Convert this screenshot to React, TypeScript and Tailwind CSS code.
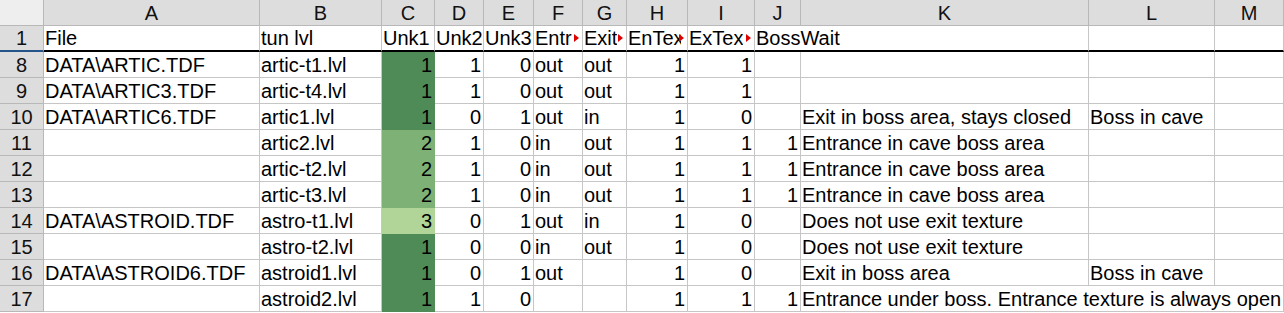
import React from 'react';

type V = string | number | null;

type Row = {
  n: string;
  cells: V[];
  spans?: Record<number, number>;
  marks?: number[];
};

const LETTERS = ['A', 'B', 'C', 'D', 'E', 'F', 'G', 'H', 'I', 'J', 'K', 'L', 'M'];

const rows: Row[] = [
  {
    n: '1',
    cells: ['File', 'tun lvl', 'Unk1', 'Unk2', 'Unk3', 'Entr', 'Exit', 'EnTex', 'ExTex', 'BossWait', null, null, null],
    spans: { 9: 2 },
    marks: [5, 6, 7, 8],
  },
  { n: '8', cells: ['DATA\\ARTIC.TDF', 'artic-t1.lvl', 1, 1, 0, 'out', 'out', 1, 1, null, null, null, null] },
  { n: '9', cells: ['DATA\\ARTIC3.TDF', 'artic-t4.lvl', 1, 1, 0, 'out', 'out', 1, 1, null, null, null, null] },
  {
    n: '10',
    cells: ['DATA\\ARTIC6.TDF', 'artic1.lvl', 1, 0, 1, 'out', 'in', 1, 0, null, 'Exit in boss area, stays closed', 'Boss in cave', null],
  },
  { n: '11', cells: [null, 'artic2.lvl', 2, 1, 0, 'in', 'out', 1, 1, 1, 'Entrance in cave boss area', null, null] },
  { n: '12', cells: [null, 'artic-t2.lvl', 2, 1, 0, 'in', 'out', 1, 1, 1, 'Entrance in cave boss area', null, null] },
  { n: '13', cells: [null, 'artic-t3.lvl', 2, 1, 0, 'in', 'out', 1, 1, 1, 'Entrance in cave boss area', null, null] },
  { n: '14', cells: ['DATA\\ASTROID.TDF', 'astro-t1.lvl', 3, 0, 1, 'out', 'in', 1, 0, null, 'Does not use exit texture', null, null] },
  { n: '15', cells: [null, 'astro-t2.lvl', 1, 0, 0, 'in', 'out', 1, 0, null, 'Does not use exit texture', null, null] },
  { n: '16', cells: ['DATA\\ASTROID6.TDF', 'astroid1.lvl', 1, 0, 1, 'out', null, 1, 0, null, 'Exit in boss area', 'Boss in cave', null] },
  {
    n: '17',
    cells: [null, 'astroid2.lvl', 1, 1, 0, null, null, 1, 1, 1, 'Entrance under boss. Entrance texture is always open', null, null],
    spans: { 10: 3 },
  },
];

// colour scale on Unk1
const tone = (v: V) => {
  if (v === 1) return 'bg-[#4f8b57] border-[#4f8b57]';
  if (v === 2) return 'bg-[#7eb176] border-[#7eb176]';
  if (v === 3) return 'bg-[#b1d498] border-[#b1d498]';
  return 'border-[#c6c6c6]';
};

function Cell({ v, span, first, green, mark }: { v: V; span: number; first: boolean; green: boolean; mark: boolean }) {
  const num = typeof v === 'number';
  const spanCls = span === 3 ? 'col-span-3' : span === 2 ? 'col-span-2' : '';
  return (
    <div
      className={[
        'relative flex items-end overflow-hidden whitespace-nowrap border-r border-b leading-[23px]',
        num ? 'justify-end pr-[2px]' : 'pl-[1px]',
        mark ? 'pr-[6px]' : '',
        green ? tone(v) : 'border-[#c6c6c6]',
        first ? 'border-b-2 border-b-black' : '',
        spanCls,
      ].join(' ')}
    >
      {mark ? <span className="min-w-0 overflow-hidden">{v}</span> : v}
      {mark && (
        <span className="absolute right-[3px] top-[8px] h-0 w-0 border-y-[4px] border-y-transparent border-l-[5px] border-l-[#e00000]" />
      )}
    </div>
  );
}

export default function App() {
  return (
    <div className="w-[1284px] h-[313px] overflow-hidden bg-white font-['Liberation_Sans',Arial,sans-serif] text-[20px] text-black">
      <div className="grid grid-cols-[44px_216px_122px_53px_49px_50px_49px_44px_61px_67px_46px_288px_126px_69px] auto-rows-[26px]">
        <div className="bg-[#eeeeee] border-r border-b border-[#b8b8b8]" />
        {LETTERS.map((l) => (
          <div
            key={l}
            className="flex items-end justify-center leading-[23px] bg-[#dddddd] border-r border-b border-[#b8b8b8] text-[#111]"
          >
            {l}
          </div>
        ))}

        {rows.map((r, ri) => {
          const out: React.ReactNode[] = [];
          out.push(
            <div
              key={`h${r.n}`}
              className={`flex items-end justify-center leading-[23px] bg-[#dddddd] border-r border-b border-[#b8b8b8] text-[#111] ${
                ri === 0 ? 'border-b-2 border-b-[#24548a]' : ''
              }`}
            >
              {r.n}
            </div>
          );
          let i = 0;
          while (i < r.cells.length) {
            const span = r.spans?.[i] ?? 1;
            out.push(
              <Cell
                key={`${r.n}-${i}`}
                v={r.cells[i]}
                span={span}
                first={ri === 0}
                green={ri > 0 && i === 2}
                mark={!!r.marks?.includes(i)}
              />
            );
            i += span;
          }
          return out;
        })}
      </div>
    </div>
  );
}
